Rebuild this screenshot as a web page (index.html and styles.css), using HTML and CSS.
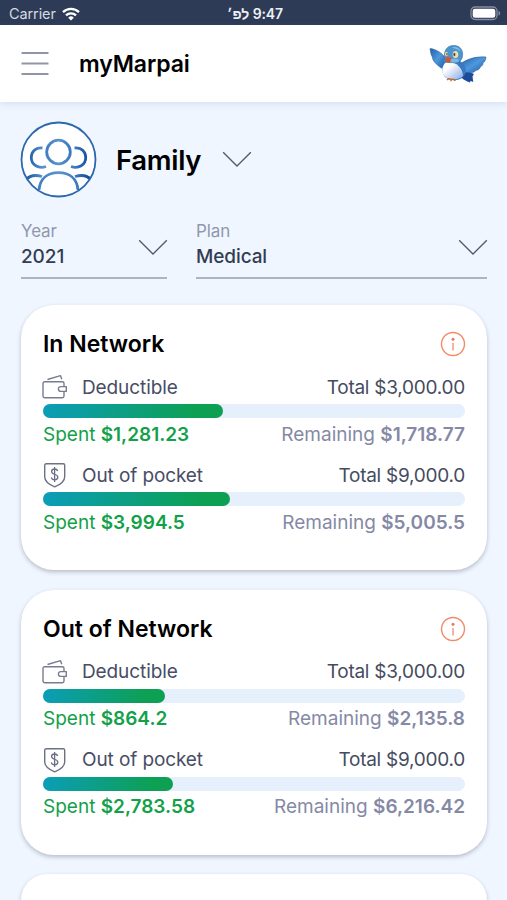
FILE: index.html
```html
<!DOCTYPE html>
<html lang="en">
<head>
<meta charset="utf-8">
<title>myMarpai</title>
<link rel="stylesheet" href="styles.css">
</head>
<body>
<svg class="defs" width="0" height="0" aria-hidden="true">
  <defs>
    <linearGradient id="wing" x1="0" y1="0" x2="1" y2="1"><stop offset="0" stop-color="#235fa8"/><stop offset=".5" stop-color="#4d98dc"/><stop offset="1" stop-color="#1f58a6"/></linearGradient>
    <linearGradient id="belly" x1="0" y1="0" x2="1" y2="1"><stop offset=".3" stop-color="#fff"/><stop offset="1" stop-color="#86a9e5"/></linearGradient>
    <linearGradient id="people" x1="0" y1="0" x2="1" y2="0"><stop offset="0" stop-color="#3f7fc2"/><stop offset=".5" stop-color="#5b93cd"/><stop offset="1" stop-color="#3b7abf"/></linearGradient>
    <linearGradient id="sides" gradientUnits="userSpaceOnUse" x1="8" y1="0" x2="69" y2="0"><stop offset="0" stop-color="#1b5cab"/><stop offset=".25" stop-color="#5b93cd"/><stop offset=".75" stop-color="#3f7ec0"/><stop offset="1" stop-color="#0f4c9e"/></linearGradient>
    <symbol id="chevron" viewBox="0 0 30 17"><path d="M1.200 1.200 15 15 28.800 1.200" fill="none" stroke="#51596a" stroke-width="1.300"/></symbol>
    <symbol id="wallet" viewBox="0 0 26 26"><g fill="none" stroke="#777c91" stroke-width="1.400" stroke-linejoin="round"><path d="M22 12V9.500a1.700 1.700 0 0 0-1.700-1.700H2.700A1.700 1.700 0 0 0 1 9.500V22a1.700 1.700 0 0 0 1.700 1.700h17.600A1.700 1.700 0 0 0 22 22v-4.300"/><path d="M24.300 12.600h-5.500a2.400 2.400 0 0 0 0 4.800h5.500z"/><path d="M5.500 5.500 18.500 1.700l1.300 3.600"/></g></symbol>
    <symbol id="shield" viewBox="0 0 26 26"><path d="M4.200 1.700h17a1.500 1.500 0 0 1 1.500 1.500v11.500c0 4.500-5.200 8.200-10 10.100C7.900 22.900 2.700 19.200 2.700 14.700V3.200a1.500 1.500 0 0 1 1.500-1.500z" fill="none" stroke="#6c7185" stroke-width="1.400" stroke-linejoin="round"/><path d="M15.700 9c-.5-1.500-1.500-2-3.100-2-1.800 0-3 .9-3 2.500 0 3.600 6.200 1.900 6.200 5.600 0 1.700-1.300 2.700-3.200 2.700-1.800 0-2.900-.8-3.300-2.400M12.600 5v15" fill="none" stroke="#696e84" stroke-width="1.300"/></symbol>
    <symbol id="info" viewBox="0 0 26 26"><circle cx="13" cy="13" r="11.500" fill="none" stroke="#f28a67" stroke-width="1.400"/><circle cx="13" cy="8.300" r="1.500" fill="#ee7750"/><path d="M13 12v7.500" stroke="#f5a085" stroke-width="1.600"/></symbol>
  </defs>
</svg>

<div class="status">
  <span class="carrier">Carrier
    <svg width="18" height="14" viewBox="0 0 18 14"><g fill="none" stroke="#fff" stroke-width="2.300"><path d="M1 5.200a11.500 11.500 0 0 1 16 0"/><path d="M4 8.400a7.200 7.200 0 0 1 10 0"/></g><path d="M9 13.600 6.200 10.700a4 4 0 0 1 5.600 0z" fill="#fff"/></svg>
  </span>
  <span class="clock" dir="rtl">9:47 לפ׳</span>
  <svg class="battery" width="31" height="15" viewBox="0 0 31 15"><rect x="1" y="1" width="26" height="12.500" rx="4" fill="none" stroke="#858d9e" stroke-width="1.300"/><rect x="2.700" y="2.700" width="22.600" height="9.100" rx="2.300" fill="#fff"/><path d="M28.500 5c2.200.7 2.200 3.900 0 4.600z" fill="#858d9e"/></svg>
</div>

<header class="header">
  <svg class="menu" width="28" height="26" viewBox="0 0 28 26"><path d="M.5 2h27M.5 12.500h27M.5 23h27" stroke="#9195a5" stroke-width="2"/></svg>
  <h1 class="brand">myMarpai</h1>
  <svg class="bird" width="58" height="40" viewBox="0 0 58 40">
    <path d="M1 4.500c6 .5 12 4.500 15 9l-1 12C8 22 3 16 3.500 13.500 1.500 10 1.500 7 1 4.500z" fill="url(#wing)" stroke="#285588" stroke-width=".5"/>
    <path d="M31 20c6-4 14-8 26-7-.2 3-1.200 5-3 6 .3 1.500-1 3-2.500 3.700-.8 2.800-3 3.600-4.500 3.600-3 3.500-8 3.500-12 2.300z" fill="url(#wing)" stroke="#285588" stroke-width=".5"/>
    <path d="M32 28c4 1 8-.5 13 2l-1.500 2.500.8 5.500-2.600-1-1 1.500C36 37 32 34 30 31z" fill="#1d4b9a"/>
    <path d="M17 16c-4 4-5.500 11-1 17 5 4 13 4.500 18 0 5-5 3-12-4-17z" fill="#3979bf"/>
    <path d="M16 19c-4 5-3.500 11 1 14.500 5 3 13 2.500 17-1.500C34 25 28 18 20 18z" fill="url(#belly)"/>
    <path d="M15.500 10C16 4 20 1.500 25 1.500c6 0 9.500 5 8.500 10.500C33 17.500 28 20 23 18.500c-5 1-8.500-2-7.500-8.500z" fill="#4a94d1" stroke="#39709b" stroke-width=".6"/>
    <path d="M23 3.500c4-1.500 8 .5 8.500 4-3-2.500-6-3-8.500-4z" fill="#7bbbe8"/>
    <ellipse cx="17.500" cy="10" rx="1.500" ry="2.300" fill="#f5dca5"/><ellipse cx="26.500" cy="10.500" rx="2.800" ry="3.500" fill="#f5dca5"/>
    <ellipse cx="18" cy="10" rx=".6" ry="1.500" fill="#4a4a45"/><ellipse cx="25.400" cy="10.500" rx="1" ry="1.800" fill="#4a4a45"/>
    <ellipse cx="25.500" cy="16.500" rx="4.500" ry="2" fill="#7db5e3"/>
    <path d="M16 14.500c2-2 4-2 6.500-.5-1 3-1.500 4.500-3.500 5-1.500-1-2.500-2.500-3-4.500z" fill="#d6552c"/>
    <path d="M18 35.800c2-1.500 3-1.300 4 .4 1-1.500 2.500-1 4.500.4" fill="none" stroke="#bd6b35" stroke-width="1.600"/>
  </svg>
</header>

<main class="main">
  <div class="member">
    <svg class="avatar" width="77" height="77" viewBox="0 0 77 77">
      <defs><clipPath id="disc"><circle cx="38.500" cy="38.500" r="37"/></clipPath></defs>
      <circle cx="38.500" cy="38.500" r="37" fill="#fff"/>
      <g fill="none" stroke-width="2.800" clip-path="url(#disc)">
        <path d="M22.500 27C15 26.500 11.300 31 11.300 36.500c0 7.500 7.200 11.500 14.700 9M54.500 27C62 26.500 65.700 31 65.700 36.500c0 7.500-7.200 11.500-14.700 9" stroke="url(#sides)"/>
        <circle cx="38.500" cy="31" r="11.800" stroke="url(#people)"/>
        <path d="M19 69c1-11.500 8.500-17.300 19.500-17.300S57 57.500 58 69" stroke="url(#people)"/>
        <path d="M6 59c3-4 9-5.500 16-3.500M71 59c-3-4-9-5.500-16-3.500" stroke="url(#sides)"/>
      </g>
      <circle cx="38.500" cy="38.500" r="37" fill="none" stroke="#2c68ae" stroke-width="1.800"/>
    </svg>
    <h2 class="member-name">Family</h2>
    <svg class="chev" width="30" height="17"><use href="#chevron"/></svg>
  </div>

  <div class="filters">
    <div class="field year"><div><div class="label">Year</div><div class="value">2021</div></div><svg class="chev" width="30" height="17"><use href="#chevron"/></svg></div>
    <div class="field plan"><div><div class="label">Plan</div><div class="value">Medical</div></div><svg class="chev" width="30" height="17"><use href="#chevron"/></svg></div>
  </div>

  <section class="card">
    <div class="card-head"><h3>In Network</h3><svg width="26" height="26"><use href="#info"/></svg></div>
    <div class="meter">
      <div class="row top"><svg width="26" height="26"><use href="#wallet"/></svg><span class="name">Deductible</span><span class="total">Total $3,000.00</span></div>
      <div class="track"><div class="fill" style="width:42.7%"></div></div>
      <div class="row bottom"><span class="spent">Spent <b>$1,281.23</b></span><span class="remaining">Remaining <b>$1,718.77</b></span></div>
    </div>
    <div class="meter">
      <div class="row top"><svg width="26" height="26"><use href="#shield"/></svg><span class="name">Out of pocket</span><span class="total">Total $9,000.0</span></div>
      <div class="track"><div class="fill" style="width:44.4%"></div></div>
      <div class="row bottom"><span class="spent">Spent <b>$3,994.5</b></span><span class="remaining">Remaining <b>$5,005.5</b></span></div>
    </div>
  </section>

  <section class="card">
    <div class="card-head"><h3>Out of Network</h3><svg width="26" height="26"><use href="#info"/></svg></div>
    <div class="meter">
      <div class="row top"><svg width="26" height="26"><use href="#wallet"/></svg><span class="name">Deductible</span><span class="total">Total $3,000.00</span></div>
      <div class="track"><div class="fill" style="width:28.8%"></div></div>
      <div class="row bottom"><span class="spent">Spent <b>$864.2</b></span><span class="remaining">Remaining <b>$2,135.8</b></span></div>
    </div>
    <div class="meter">
      <div class="row top"><svg width="26" height="26"><use href="#shield"/></svg><span class="name">Out of pocket</span><span class="total">Total $9,000.0</span></div>
      <div class="track"><div class="fill" style="width:30.9%"></div></div>
      <div class="row bottom"><span class="spent">Spent <b>$2,783.58</b></span><span class="remaining">Remaining <b>$6,216.42</b></span></div>
    </div>
  </section>

  <section class="card card-peek"></section>
</main>
</body>
</html>
```
FILE: styles.css
```css
* { box-sizing: border-box; }
body {
  margin: 0;
  height: 900px;
  overflow: hidden;
  display: flex;
  flex-direction: column;
  background: #eff6ff;
  font-family: Inter, "Liberation Sans", sans-serif;
  color: #000;
}
h1, h2, h3 { margin: 0; font-weight: 600; white-space: nowrap; }
svg { display: block; flex: none; }
.defs { height: 0; }

.status {
  flex: none;
  height: 25px;
  padding: 2px 6px 0 9px;
  display: grid;
  grid-template-columns: 1fr auto 1fr;
  align-items: center;
  background: #2e3b57;
  color: #eef0f4;
}
.carrier { display: flex; align-items: center; gap: 6px; font-size: 14.500px; color: #d5d9e0; letter-spacing: -.1px; }
.clock { font-size: 14px; font-weight: 600; letter-spacing: -.1px; }
.battery { justify-self: end; }

.header {
  flex: none;
  height: 77px;
  padding: 0 20px 0 21px;
  display: flex;
  align-items: center;
  background: #fff;
  box-shadow: 0 2px 7px rgba(90, 130, 180, .18);
}
.brand { margin-left: 30px; padding-top: 1px; font-size: 23px; letter-spacing: -.1px; }
.bird { margin-left: auto; }

.main { flex: 1; min-height: 0; padding: 19px 20px 0 21px; display: flex; flex-direction: column; }
.member { flex: none; display: flex; align-items: center; height: 77px; margin-left: -1px; }
.member-name { margin: 0 21px 0 19px; font-size: 27.500px; letter-spacing: -.3px; }

.filters { flex: none; display: flex; gap: 29px; margin-top: 22px; }
.field {
  height: 59px;
  border-bottom: 2px solid #adb3c1;
  display: flex;
  justify-content: space-between;
}
.field .chev { margin: 19px -1px 0 0; }
.year { width: 146px; }
.plan { flex: 1; }
.label { font-size: 17px; line-height: 22px; color: #9197ad; letter-spacing: -.1px; }
.value { margin-top: 2px; font-size: 19px; line-height: 26px; font-weight: 500; color: #333c51; letter-spacing: -.1px; }

.card {
  flex: none;
  height: 265px;
  margin-top: 19.500px;
  padding: 25px 22px 0;
  border-radius: 33px;
  background: #fff;
  box-shadow: 0 2px 4px rgba(60, 60, 75, .3);
}
.filters + .card { margin-top: 26px; }
.card-peek { flex: 1; height: auto; padding: 0; border-radius: 33px 33px 0 0; }
.card-head { height: 28px; display: flex; align-items: center; justify-content: space-between; }
.card-head h3 { font-size: 23px; letter-spacing: 0; }
.card-head svg { margin-right: -1px; }
.meter { height: 88px; padding-top: 17px; }
.row { display: flex; align-items: center; font-size: 19px; white-space: nowrap; }
.top { height: 24px; color: #484d66; letter-spacing: -.1px; }
.top svg { margin-left: -1px; }
.name { margin-left: 14px; }
.total { margin-left: auto; color: #454c61; letter-spacing: -.25px; }
.track { height: 14px; margin-top: 5px; border-radius: 7px; background: #e6effc; }
.fill { height: 100%; border-radius: 7px; background: linear-gradient(100deg, #0b9db8, #0da052 85%); }
.bottom { height: 24px; margin-top: 4px; justify-content: space-between; }
.bottom b { font-weight: 600; }
.spent { color: #12a148; }
.remaining { color: #8589a5; }
```
